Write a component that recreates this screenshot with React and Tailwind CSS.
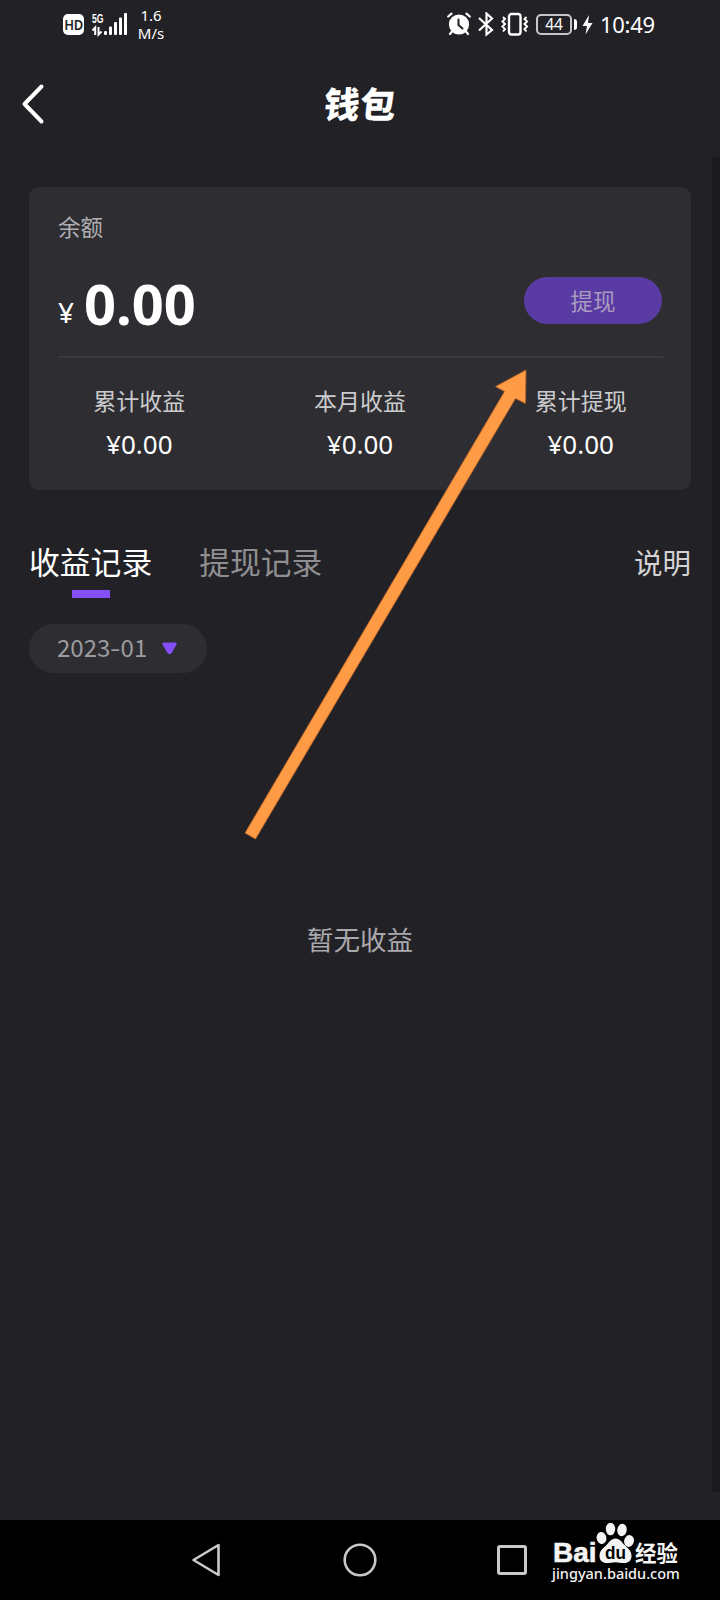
import React from "react";

const stats = [
  { label: "累计收益", value: "¥0.00" },
  { label: "本月收益", value: "¥0.00" },
  { label: "累计提现", value: "¥0.00" },
];

const StatusBar = () => {
  return (
    <div className="h-[50px] flex items-start justify-between pl-[63px] pr-[65px] text-white">
      <div className="flex items-start">
        <div className="mt-[14px] w-[21px] h-[21px] rounded-[5px] bg-white text-[#222126] flex items-center justify-center text-[13px] font-semibold tracking-[-0.5px] leading-none">
          <span className="scale-y-115">HD</span>
        </div>
        <div className="ml-[8px] w-[36px] mt-[8px]">
          <svg width="36" height="29" viewBox="0 -4 36 29" fill="#fff">
            <text x="0" y="10.500" fontSize="12" fontWeight="700" fontFamily="Liberation Sans" textLength="11.5" lengthAdjust="spacingAndGlyphs">5G</text>
            <path d="M3.200 23V15.500L0.500 18.500M6.500 15v7.500l3-3" fill="none" stroke="#fff" strokeWidth="2" />
            <rect x="12" y="19" width="3" height="4" rx="1.200" />
            <rect x="17" y="14.500" width="3" height="8.500" rx="1" />
            <rect x="22" y="10" width="3" height="13" rx="1" />
            <rect x="27" y="5.500" width="3" height="17.500" rx="1" />
            <rect x="32" y="1" width="3" height="22" rx="1" />
          </svg>
        </div>
        <div className="ml-[9px] mt-[6px] w-[28px] flex flex-col items-center text-[15px] leading-[18px]">
          <span>1.6</span>
          <span>M/s</span>
        </div>
      </div>

      <div className="flex items-start">
        {/* alarm */}
        <svg className="mt-[12px]" width="24" height="25" viewBox="0 0 24 25" fill="none" stroke="#fff" strokeWidth="2.200" strokeLinecap="round">
          <circle cx="12" cy="12.500" r="9" fill="#fff" />
          <path d="M1.200 4.500 4.500 1.700M22.800 4.500 19.500 1.700M5 19.500l-2 2.500M19 19.500l2 2.500" />
          <path d="M11.500 7.500v5.500l4 3.500" stroke="#222126" strokeWidth="2" />
        </svg>
        {/* bluetooth */}
        <svg className="ml-[7px] mt-[12px]" width="16" height="25" viewBox="0 0 16 25" fill="none" stroke="#fff" strokeWidth="2.200">
          <path d="M1 6l13 12-5.500 4.500V1.500L14 6.500 1 18.500" />
        </svg>
        {/* vibrate */}
        <svg className="ml-[7px] mt-[12px]" width="28" height="25" viewBox="0 0 28 25" fill="none" stroke="#fff" strokeWidth="2">
          <rect x="8" y="2" width="11.500" height="20.500" rx="2.500" strokeWidth="2.400" />
          <path d="M2 5l2 2-2.500 2.500L4 12l-2.500 2.500L4 17l-2 2.500M25.500 5l-2 2 2.500 2.500L23.500 12l2.500 2.500L23.500 17l2 2.500" />
        </svg>
        {/* battery */}
        <div className="ml-[7px] mt-[14px] w-[36px] h-[21px] rounded-[5px] border-2 border-white/75 flex items-center justify-center text-[15.5px] leading-none">
          44
        </div>
        <div className="ml-[2px] mt-[19px] w-[3px] h-[11px] rounded-r bg-white"></div>
        <svg className="ml-[5px] mt-[14px]" width="11" height="22" viewBox="0 0 11 22" fill="#fff">
          <path d="M7 1 0.500 12H5L3.500 20.500 10.500 9H6z" />
        </svg>
        <span className="ml-[7px] -mr-px mt-[10px] w-[56px] text-[22px] leading-[28px] tracking-[-0.3px]">10:49</span>
      </div>
    </div>
  );
};

const BaiduLogo = () => {
  return (
    <div className="w-[130px] text-[#f4f4f4]">
      <svg className="block overflow-visible" width="130" height="45" viewBox="0 0 130 45" fill="#f4f4f4" fontFamily="Liberation Sans, Noto Sans CJK SC">
        <text x="0" y="41.500" fontSize="28" fontWeight="700" textLength="43.5" lengthAdjust="spacingAndGlyphs" stroke="#f4f4f4" strokeWidth="0.6">Bai</text>
        <ellipse cx="48.500" cy="18" rx="4.900" ry="6" transform="rotate(-10 48.500 18)" />
        <ellipse cx="57.500" cy="9" rx="4.700" ry="6.300" />
        <ellipse cx="69" cy="10" rx="4.700" ry="6.300" transform="rotate(8 69 10)" />
        <ellipse cx="76" cy="21" rx="4.900" ry="6" transform="rotate(12 76 21)" />
        <path d="M62.500 18.500c4.500 0 6.500 4 9 6.500 3.500 3.500 7 5.500 7 11 0 4.500-3 7-7.500 7-3 0-5.500-.8-8.500-.8s-5.500.8-8.500.8c-4.500 0-7.500-2.500-7.500-7 0-5.500 3.500-7.500 7-11 2.500-2.500 4.500-6.500 9-6.500z" />
        <text x="52" y="39" fontSize="18" fontWeight="700" fill="#000" textLength="21" lengthAdjust="spacingAndGlyphs">du</text>
        <text x="82" y="40.500" fontSize="22" fontWeight="700" textLength="43" lengthAdjust="spacingAndGlyphs">经验</text>
      </svg>
      <div className="-ml-px text-[14.5px] leading-[16px] font-medium whitespace-nowrap">jingyan.baidu.com</div>
    </div>
  );
};

const App = () => {
  return (
    <div className="relative w-[720px] h-[1600px] overflow-hidden flex flex-col bg-[#222126] font-['Noto_Sans','Noto_Sans_CJK_SC',sans-serif]">
      <StatusBar />

      <header className="h-[107px] flex items-start">
        <svg className="ml-[20px] mt-[33px]" width="26" height="42" viewBox="0 0 26 42" fill="none" stroke="#fff" strokeWidth="4" strokeLinecap="round" strokeLinejoin="round">
          <path d="M21.500 3.500 4.500 21l17 17.500" />
        </svg>
        <h1 className="flex-1 mt-[29px] mr-[46px] text-center text-[36px] leading-[52px] font-black text-white -skew-x-6">钱包</h1>
      </header>

      <div className="flex h-[1335px]">
        <main className="w-[712px] pl-[29px] pr-[21px] pt-[30px]">
          <section className="h-[303px] rounded-[10px] bg-[#2e2d32] pl-[29px] pr-[28px]">
            <div className="pt-[25px] text-[22.5px] leading-[32px] text-[#aeadb2]">余额</div>
            <div className="h-[114px] flex justify-between border-b-2 border-[#39383d]">
              <div className="flex items-baseline text-white">
                <span className="text-[28px] -translate-y-[2px]">¥</span>
                <span className="ml-[10px] text-[56px] leading-[118px] font-bold">0.00</span>
              </div>
              <button className="mt-[33px] mr-[1px] w-[138px] h-[47px] rounded-full bg-[#5a3ba3] pt-[2px] text-[22.5px] text-[#a99bc0]">提现</button>
            </div>
            <div className="flex -ml-[29px] -mr-[28px] pt-[26px]">
              {stats.map((item) => (
                <div key={item.label} className="flex-1 flex flex-col items-center">
                  <span className="text-[23px] leading-[34px] text-[#cbcbcd]">{item.label}</span>
                  <span className="mt-[9px] text-[26px] leading-[34px] text-white">{item.value}</span>
                </div>
              ))}
            </div>
          </section>

          <div className="mt-[49px] flex items-start text-[30.8px] leading-[46px]">
            <div className="flex flex-col items-center text-white">
              <span>收益记录</span>
              <div className="mt-[5px] w-[38px] h-[8px] bg-[#854ff8]"></div>
            </div>
            <span className="ml-[47px] text-[#8f8f92]">提现记录</span>
            <span className="ml-auto mt-px text-[28.5px] text-[#d3d3d5]">说明</span>
          </div>

          <div className="mt-[26px] w-[178px] h-[49px] rounded-full bg-[#2e2d32] flex items-center pl-[28px] font-['Noto_Sans_CJK_SC',sans-serif]">
            <span className="-mt-[3px] flex items-center text-[24px] leading-none text-[#9c9c9f]">
              2023<span className="scale-x-125 mx-[1px]">-</span>01
            </span>
            <svg className="ml-[15px]" width="15" height="13" viewBox="0 0 15 13" fill="#854ff8" stroke="#854ff8" strokeWidth="2.400" strokeLinejoin="round">
              <path d="M1.500 1.800h12l-4.800 8.400q-1.200 1.800-2.400 0z" />
            </svg>
          </div>

          <p className="mt-[247px] text-center text-[26.5px] leading-[40px] text-[#a9a9ad]">暂无收益</p>
        </main>
        <div className="w-[8px] bg-[#1a1a1c]"></div>
      </div>

      <div className="h-[28px]"></div>

      <nav className="h-[80px] bg-black flex items-start pl-[190px]">
        <svg className="mt-[22px]" width="32" height="36" viewBox="0 0 32 36" fill="none" stroke="#c9c9c9" strokeWidth="2.600" strokeLinejoin="round">
          <path d="M28.500 3v30L3.500 18z" />
        </svg>
        <svg className="ml-[120px] mt-[22px]" width="36" height="36" viewBox="0 0 36 36" fill="none" stroke="#c9c9c9" strokeWidth="2.600">
          <circle cx="18" cy="18" r="15.300" />
        </svg>
        <div className="ml-[119px] mt-[25px] w-[30px] h-[30px] rounded-[3px] border-[3px] border-[#c9c9c9]"></div>
        <div className="ml-[26px]">
          <BaiduLogo />
        </div>
      </nav>

      {/* arrow pointing at the withdraw button */}
      <svg className="absolute left-0 top-0 pointer-events-none" width="720" height="1600" viewBox="0 0 720 1600">
        <path d="M526 370 495.500 386.500 504.500 391.500 245 833 255.500 839 515.500 398.500 525.500 403.500z" fill="#ff9b45" stroke="#b8622a" strokeWidth="0.8" />
      </svg>
    </div>
  );
};

export default App;
